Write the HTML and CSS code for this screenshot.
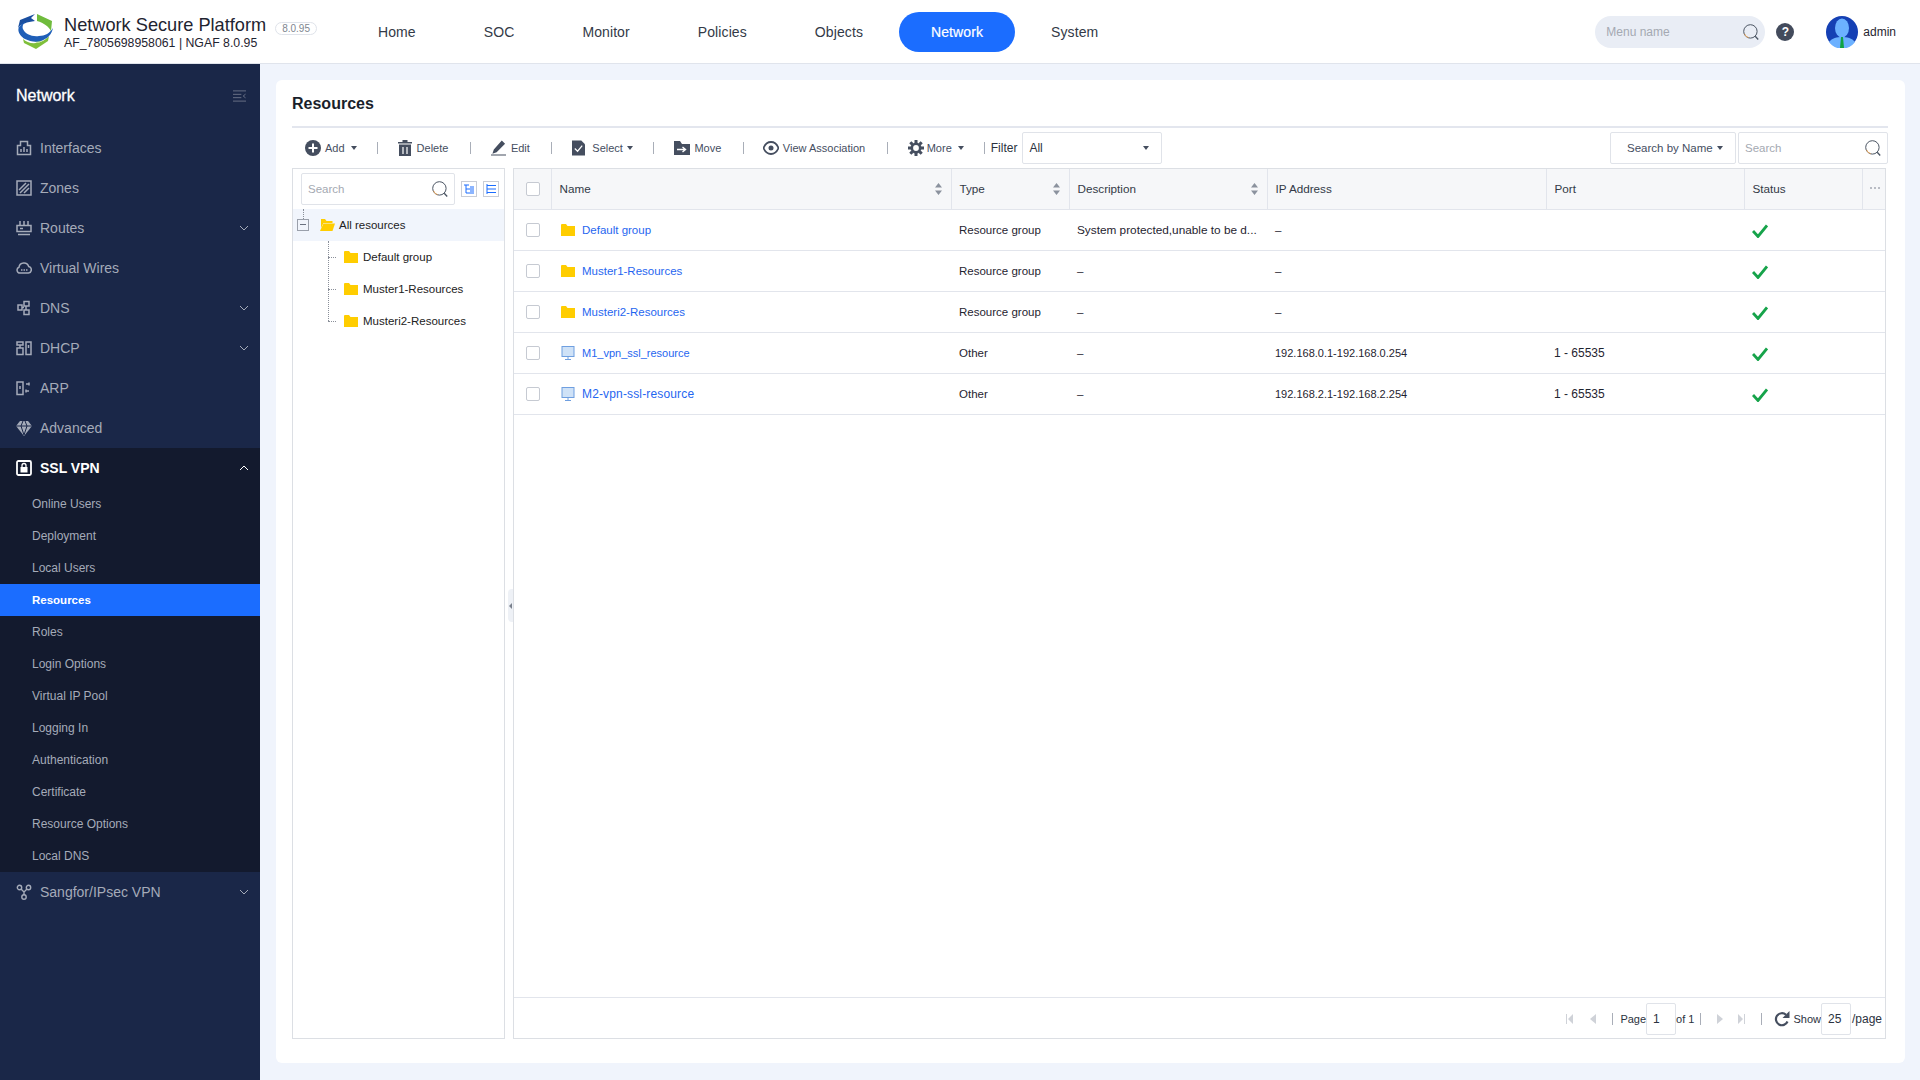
FILE: index.html
```html
<!DOCTYPE html>
<html lang="en">
<head>
    <meta charset="UTF-8">
    <title>Network Secure Platform - Resources</title>
    <link rel="stylesheet" href="styles.css">
</head>
<body>
    <svg class="sprite" xmlns="http://www.w3.org/2000/svg">
        <symbol id="i-search" viewBox="0 0 16 16"><circle cx="7.400" cy="7.400" r="6.700" fill="none" stroke="#4b5563" stroke-width="1"/><path d="M12.200 12.200l3 3.300" fill="none" stroke="#4b5563" stroke-width="1.300"/><path d="M1.500 9.800a6.200 6.200 0 0 0 4.200 3.900" fill="none" stroke="#e2a15a" stroke-width="1"/></symbol>
        <symbol id="i-folder" viewBox="0 0 14 12"><path d="M0 1a1 1 0 0 1 1-1h4l1.500 2H14v10H0z" fill="#ffcd00"/></symbol>
        <symbol id="i-screen" viewBox="0 0 14 14"><rect x="1" y="0.500" width="12" height="10" fill="#cfe2f7" stroke="#6f9fe0"/><path d="M7 11v2M4 13.500h6" stroke="#6f9fe0"/></symbol>
        <symbol id="i-check" viewBox="0 0 16 14"><path d="M1 7l5 5.500L15 1.500" fill="none" stroke="#16a34a" stroke-width="2.800"/></symbol>
        <symbol id="i-sort" viewBox="0 0 7 12"><path d="M3.500 0L7 4.500H0zM3.500 12L0 7.500h7z" fill="#8b929e"/></symbol>
        <symbol id="i-chev" viewBox="0 0 10 6"><path d="M1 1l4 4 4-4" fill="none" stroke="currentColor" stroke-width="1"/></symbol>
    </svg>

    <header class="topbar">
        <div class="brand">
            <svg class="logo" viewBox="0 0 36 36">
                <path d="M19 0l15 7-1 10c-2-4-7-8-14-10z" fill="#6fbb3c"/>
                <path d="M17 0L2 6 0 14C3 10 9 8 17 7l-4-3z" fill="#1a4fa0"/>
                <path d="M5 25c6 6 18 6 26-3l-1 5-12 8-12-6z" fill="#7fbf3a"/>
                <path d="M14 24c4 1 9 0 12-1-1 3-4 6-7 6-2-1-4-3-5-5z" fill="#b5dc8a"/>
                <path d="M1 13c-2 4 1 9 6 12 6 3 14 4 20 0 4-2 7-6 8-11-3 5-8 8-14 8-7 1-14-2-16-7-1-2 0-5 2-7-1 0-4 3-6 5z" fill="#1f5fb8"/>
            </svg>
            <div class="brand-text">
                <div class="brand-name">Network Secure Platform</div>
                <div class="brand-sub">AF_7805698958061 | NGAF 8.0.95</div>
            </div>
            <span class="version">8.0.95</span>
        </div>
        <nav class="topnav">
            <a>Home</a>
            <a>SOC</a>
            <a>Monitor</a>
            <a>Policies</a>
            <a>Objects</a>
            <a class="active">Network</a>
            <a>System</a>
        </nav>
        <div class="top-right">
            <div class="menu-search">
                <input type="text" placeholder="Menu name">
                <svg class="ico-16"><use href="#i-search"/></svg>
            </div>
            <span class="help">?</span>
            <svg class="avatar" viewBox="0 0 32 32">
                <circle cx="16" cy="16" r="16" fill="#1540b4"/>
                <ellipse cx="16" cy="12" rx="7" ry="9.500" fill="#6cb1ff"/>
                <path d="M3 26c3-4 8-5 13-5s10 1 13 5a16 16 0 0 1-26 0z" fill="#6cb1ff"/>
                <path d="M15 21h2l1 11h-4z" fill="#10a344"/>
            </svg>
            <span class="user">admin</span>
        </div>
    </header>

    <div class="layout">
        <aside class="sidebar">
            <div class="side-head">
                <span>Network</span>
                <svg class="side-toggle" viewBox="0 0 14 12"><path d="M0 .5h14M0 4.200h9M0 7.800h9M0 11.500h14M13.500 4L11 6l2.500 2" fill="none" stroke="#6d7589"/></svg>
            </div>

            <a class="side-item">
                <svg class="side-ico" viewBox="0 0 16 16"><path d="M1.500 5.500h3v-4h7v4h3v9h-13z" fill="none" stroke="currentColor" stroke-width="1.500"/><path d="M5 9v3M8 7v5M11 9v3" stroke="currentColor" stroke-width="1.500"/></svg>
                Interfaces
            </a>
            <a class="side-item">
                <svg class="side-ico" viewBox="0 0 16 16"><rect x="1" y="1" width="14" height="14" fill="none" stroke="currentColor" stroke-width="1.500"/><path d="M3 10l7-7M4 13l9-9M8 13l5-5" stroke="currentColor" stroke-width="1.500"/></svg>
                Zones
            </a>
            <a class="side-item">
                <svg class="side-ico" viewBox="0 0 16 16"><rect x="1" y="5.500" width="14" height="6" fill="none" stroke="currentColor" stroke-width="1.500"/><path d="M4 1v4M8 1v4M12 1v4M2 14.500h12M4 8.500h3" stroke="currentColor" stroke-width="1.500"/></svg>
                Routes
                <svg class="chev"><use href="#i-chev"/></svg>
            </a>
            <a class="side-item">
                <svg class="side-ico" viewBox="0 0 16 16"><path d="M4 13a3 3 0 0 1-1-5.800A5 5 0 0 1 12.700 6.500 3.300 3.300 0 0 1 12.500 13z" fill="none" stroke="currentColor" stroke-width="1.500"/><path d="M5 10h1.500M7.500 10H9M10 10h1.500" stroke="currentColor" stroke-width="1.500"/></svg>
                Virtual Wires
            </a>
            <a class="side-item">
                <svg class="side-ico" viewBox="0 0 16 16"><path d="M8 1.500h5v4.500H8zM2 5h4v5H2zM8 10h5v4.500H8zM6 7.500h2M10 6v4" fill="none" stroke="currentColor" stroke-width="1.500"/></svg>
                DNS
                <svg class="chev"><use href="#i-chev"/></svg>
            </a>
            <a class="side-item">
                <svg class="side-ico" viewBox="0 0 16 16"><path d="M1 2h6v3H1zM1 8h6v6.500H1zM10 2h5v12.500h-5zM4 5v3M12.500 5v3" fill="none" stroke="currentColor" stroke-width="1.500"/></svg>
                DHCP
                <svg class="chev"><use href="#i-chev"/></svg>
            </a>
            <a class="side-item">
                <svg class="side-ico" viewBox="0 0 16 16"><path d="M1 2h6v12.500H1zM4 6v3" fill="none" stroke="currentColor" stroke-width="1.500"/><path d="M10 4h3M10 11h3M13 2.500v3M10 9.500v3" stroke="currentColor" stroke-width="1.500"/></svg>
                ARP
            </a>
            <a class="side-item">
                <svg class="side-ico" viewBox="0 0 16 16"><path d="M4 1h8l4 5-8 10L0 6z" fill="currentColor"/><path d="M0 6h16M5 6l3 9 3-9M5 6l2-5M11 6L9 1" stroke="#1a2748" stroke-width="1" fill="none"/></svg>
                Advanced
            </a>

            <div class="side-group">
                <a class="side-item open">
                    <svg class="side-ico" viewBox="0 0 16 16"><rect x="1" y="1" width="14" height="14" rx="1.500" fill="none" stroke="currentColor" stroke-width="1.800"/><rect x="4.500" y="7" width="7" height="5.500" fill="currentColor"/><path d="M6 7V5.500a2 2 0 0 1 4 0V7" fill="none" stroke="currentColor" stroke-width="1.300"/></svg>
                    SSL VPN
                    <svg class="chev up"><use href="#i-chev"/></svg>
                </a>
                <a class="sub-item">Online Users</a>
                <a class="sub-item">Deployment</a>
                <a class="sub-item">Local Users</a>
                <a class="sub-item active">Resources</a>
                <a class="sub-item">Roles</a>
                <a class="sub-item">Login Options</a>
                <a class="sub-item">Virtual IP Pool</a>
                <a class="sub-item">Logging In</a>
                <a class="sub-item">Authentication</a>
                <a class="sub-item">Certificate</a>
                <a class="sub-item">Resource Options</a>
                <a class="sub-item">Local DNS</a>
            </div>

            <a class="side-item">
                <svg class="side-ico" viewBox="0 0 16 16"><circle cx="3.500" cy="3.500" r="2.200" fill="none" stroke="currentColor" stroke-width="1.400"/><circle cx="12.500" cy="3.500" r="2.200" fill="none" stroke="currentColor" stroke-width="1.400"/><circle cx="8" cy="13" r="2.200" fill="none" stroke="currentColor" stroke-width="1.400"/><path d="M5 5l2.500 2.500M11 5L8.500 7.500M8 7v4" fill="none" stroke="currentColor" stroke-width="1.400"/></svg>
                Sangfor/IPsec VPN
                <svg class="chev"><use href="#i-chev"/></svg>
            </a>
        </aside>

        <main class="content">
            <section class="card">
                <h1 class="page-title">Resources</h1>

                <div class="toolbar">
                    <a class="tool tool-menu">
                        <svg class="tool-ico" viewBox="0 0 16 16"><circle cx="8" cy="8" r="8"/><path d="M8 3.500v9M3.500 8h9" stroke="#fff" stroke-width="2"/></svg>
                        Add <i class="caret"></i>
                    </a>
                    <i class="sep"></i>
                    <a class="tool">
                        <svg class="tool-ico ico-delete" viewBox="0 0 14 16"><path d="M0 2h14v1.500H0zM4.500 0h5v2h-5zM1 4.500h12V16H1z"/><path d="M5 7v7M9 7v7" stroke="#fff" stroke-width="1.200"/></svg>
                        Delete
                    </a>
                    <i class="sep"></i>
                    <a class="tool">
                        <svg class="tool-ico ico-edit" viewBox="0 0 16 16"><path d="M11.500 0L15 3.500 6 12.500 1.500 14 3 9.500zM0 15h16v1H0z"/></svg>
                        Edit
                    </a>
                    <i class="sep"></i>
                    <a class="tool tool-menu tool-select">
                        <svg class="tool-ico ico-select" viewBox="0 0 14 16"><path d="M0 0h10l4 4v12H0z"/><path d="M3 8.500l3 3 5-6" fill="none" stroke="#fff" stroke-width="1.300"/></svg>
                        Select <i class="caret"></i>
                    </a>
                    <i class="sep"></i>
                    <a class="tool">
                        <svg class="tool-ico" viewBox="0 0 16 16"><path d="M0 1h6l2 3h8v11H0z"/><path d="M3 9.500h8M8.500 7l3 2.500-3 2.500" fill="none" stroke="#fff" stroke-width="1.400"/></svg>
                        Move
                    </a>
                    <i class="sep"></i>
                    <a class="tool tool-eye">
                        <svg class="tool-ico" viewBox="0 0 16 14"><path d="M8 1C4 1 1.500 4.500.5 7c1 2.500 3.500 6 7.500 6s6.500-3.500 7.500-6C14.500 4.500 12 1 8 1z" fill="none" stroke="#454e5f" stroke-width="1.800"/><circle cx="8" cy="7" r="2.500"/></svg>
                        View Association
                    </a>
                    <i class="sep"></i>
                    <a class="tool tool-menu">
                        <svg class="tool-ico ico-gear" viewBox="0 0 16 16"><circle cx="8" cy="8" r="4.200" fill="none" stroke="#454e5f" stroke-width="2.600"/><path d="M8 0v3M8 13v3M0 8h3M13 8h3M2.300 2.300l2.100 2.100M11.600 11.600l2.100 2.100M13.700 2.300l-2.100 2.100M4.400 11.600l-2.100 2.100" stroke="#454e5f" stroke-width="3"/></svg>
                        More <i class="caret"></i>
                    </a>
                    <i class="sep sep-near"></i>
                    <span class="filter-label">Filter</span>
                    <div class="select filter-select">All <i class="caret"></i></div>

                    <div class="search-group">
                        <div class="select search-by">Search by Name <i class="caret"></i></div>
                        <div class="search-box">
                            <input type="text" placeholder="Search">
                            <svg class="ico-16"><use href="#i-search"/></svg>
                        </div>
                    </div>
                </div>

                <div class="panels">
                    <div class="tree-panel">
                        <div class="tree-tools">
                            <div class="search-box tree-search">
                                <input type="text" placeholder="Search">
                                <svg class="ico-16"><use href="#i-search"/></svg>
                            </div>
                            <span class="tree-btn">
                                <svg viewBox="0 0 10 10"><path d="M0 1h5M2 1v8h8M2 5h8M6 3h4M6 7h4" fill="none" stroke="#1b6dff"/></svg>
                            </span>
                            <span class="tree-btn">
                                <svg viewBox="0 0 10 10"><path d="M1 0v10M1 1.500h9M1 5h9M1 8.500h9" fill="none" stroke="#1b6dff"/></svg>
                            </span>
                        </div>
                        <div class="tree-root">
                            <i class="tree-stub"></i>
                            <span class="tree-toggle"></span>
                            <svg class="folder-open" viewBox="0 0 15 12"><path d="M1 0h4l1.500 2h6v2H3.500L1 9z" fill="#ffcd00"/><path d="M3.500 4.500H15L12.500 12H0z" fill="#ffcd00"/></svg>
                            All resources
                        </div>
                        <div class="tree-children">
                            <div class="tree-node"><svg class="folder"><use href="#i-folder"/></svg>Default group</div>
                            <div class="tree-node"><svg class="folder"><use href="#i-folder"/></svg>Muster1-Resources</div>
                            <div class="tree-node"><svg class="folder"><use href="#i-folder"/></svg>Musteri2-Resources</div>
                        </div>
                    </div>

                    <span class="panel-handle"></span>

                    <div class="table-panel">
                        <div class="table-wrap">
                            <table class="res-table">
                                <thead>
                                    <tr>
                                        <th class="col-check"><span class="checkbox"></span></th>
                                        <th class="col-name">Name<svg class="sort"><use href="#i-sort"/></svg></th>
                                        <th class="col-type">Type<svg class="sort"><use href="#i-sort"/></svg></th>
                                        <th class="col-desc">Description<svg class="sort"><use href="#i-sort"/></svg></th>
                                        <th class="col-ip">IP Address</th>
                                        <th class="col-port">Port</th>
                                        <th class="col-status">Status</th>
                                        <th class="col-more">
                                            <svg class="dots" viewBox="0 0 10 2"><circle cx="1" cy="1" r="1"/><circle cx="5" cy="1" r="1"/><circle cx="9" cy="1" r="1"/></svg>
                                        </th>
                                    </tr>
                                </thead>
                                <tbody>
                                    <tr>
                                        <td><span class="checkbox"></span></td>
                                        <td><a class="res-link"><svg class="folder"><use href="#i-folder"/></svg>Default group</a></td>
                                        <td>Resource group</td>
                                        <td class="desc-text">System protected,unable to be d...</td>
                                        <td>–</td>
                                        <td></td>
                                        <td><svg class="ok"><use href="#i-check"/></svg></td>
                                        <td></td>
                                    </tr>
                                    <tr>
                                        <td><span class="checkbox"></span></td>
                                        <td><a class="res-link"><svg class="folder"><use href="#i-folder"/></svg>Muster1-Resources</a></td>
                                        <td>Resource group</td>
                                        <td>–</td>
                                        <td>–</td>
                                        <td></td>
                                        <td><svg class="ok"><use href="#i-check"/></svg></td>
                                        <td></td>
                                    </tr>
                                    <tr>
                                        <td><span class="checkbox"></span></td>
                                        <td><a class="res-link"><svg class="folder"><use href="#i-folder"/></svg>Musteri2-Resources</a></td>
                                        <td>Resource group</td>
                                        <td>–</td>
                                        <td>–</td>
                                        <td></td>
                                        <td><svg class="ok"><use href="#i-check"/></svg></td>
                                        <td></td>
                                    </tr>
                                    <tr>
                                        <td><span class="checkbox"></span></td>
                                        <td><a class="res-link res-narrow"><svg class="screen"><use href="#i-screen"/></svg>M1_vpn_ssl_resource</a></td>
                                        <td>Other</td>
                                        <td>–</td>
                                        <td class="ip-text">192.168.0.1-192.168.0.254</td>
                                        <td class="port-text">1 - 65535</td>
                                        <td><svg class="ok"><use href="#i-check"/></svg></td>
                                        <td></td>
                                    </tr>
                                    <tr>
                                        <td><span class="checkbox"></span></td>
                                        <td><a class="res-link res-wide"><svg class="screen"><use href="#i-screen"/></svg>M2-vpn-ssl-resource</a></td>
                                        <td>Other</td>
                                        <td>–</td>
                                        <td class="ip-text">192.168.2.1-192.168.2.254</td>
                                        <td class="port-text">1 - 65535</td>
                                        <td><svg class="ok"><use href="#i-check"/></svg></td>
                                        <td></td>
                                    </tr>
                                </tbody>
                            </table>
                        </div>
                        <div class="pager">
                            <svg class="pg-ico first" viewBox="0 0 7 10"><path d="M0 0h1v10H0zM7 0v10L2 5z"/></svg>
                            <svg class="pg-ico prev" viewBox="0 0 6 10"><path d="M6 0v10L0 5z"/></svg>
                            <i class="sep sep-page"></i>
                            <span class="pg-label">Page</span>
                            <span class="pg-input">1</span>
                            <span class="pg-label pg-of">of 1</span>
                            <i class="sep"></i>
                            <svg class="pg-ico next" viewBox="0 0 6 10"><path d="M0 0v10l6-5z"/></svg>
                            <svg class="pg-ico last" viewBox="0 0 7 10"><path d="M7 0H6v10h1zM0 0v10l5-5z"/></svg>
                            <i class="sep"></i>
                            <svg class="pg-refresh" viewBox="0 0 16 16"><path d="M13.500 10.500A6 6 0 1 1 12 3.800" fill="none" stroke="#454e5f" stroke-width="2.200"/><path d="M15.500 0v7h-7z" fill="#454e5f"/></svg>
                            <span class="pg-label">Show</span>
                            <span class="pg-input">25</span>
                            <span class="pg-per">/page</span>
                        </div>
                    </div>
                </div>
            </section>
        </main>
    </div>
</body>
</html>
```

FILE: styles.css
```css
* {
    box-sizing: border-box;
}

html,
body {
    margin: 0;
    height: 100%;
}

body {
    display: flex;
    flex-direction: column;
    width: 1920px;
    height: 1080px;
    overflow: hidden;
    background: #f0f4fc;
    color: #1f2430;
    font-family: "Liberation Sans", Arial, sans-serif;
    font-size: 12px;
}

a {
    color: inherit;
    text-decoration: none;
}

i {
    font-style: normal;
}

input {
    border: none;
    outline: none;
    background: transparent;
    font-family: inherit;
    font-size: 11.500px;
    min-width: 0;
    padding: 0;
    flex: 1;
}

input::placeholder {
    color: #a4a9b2;
    opacity: 1;
}

.sprite {
    display: none;
}

.ico-16 {
    width: 16px;
    height: 16px;
    flex: none;
}

/* Top bar */
.topbar {
    display: flex;
    align-items: center;
    height: 64px;
    flex: none;
    background: #fff;
    border-bottom: 1px solid #e0e4ec;
}

.brand {
    display: flex;
    align-items: center;
    width: 346px;
    flex: none;
    padding-left: 18px;
}

.logo {
    width: 36px;
    height: 36px;
    flex: none;
}

.brand-text {
    margin-left: 10px;
    white-space: nowrap;
}

.brand-name {
    font-size: 18.200px;
    line-height: 22px;
    color: #1f2430;
}

.brand-sub {
    font-size: 12.300px;
    line-height: 14px;
}

.version {
    margin: -6px 0 0 9px;
    padding: 0 6px;
    height: 13px;
    line-height: 11px;
    border: 1px solid #dfe3ea;
    border-radius: 7px;
    font-size: 10px;
    color: #80868f;
}

.topnav {
    display: flex;
    gap: 4px;
}

.topnav a {
    height: 40px;
    line-height: 40px;
    padding: 0 32px;
    border-radius: 20px;
    font-size: 14px;
    letter-spacing: .1px;
    color: #333a47;
}

.topnav a.active {
    background: #1b6dff;
    color: #fff;
    -webkit-text-stroke: .2px #fff;
}

.top-right {
    display: flex;
    align-items: center;
    margin-left: auto;
    padding-right: 24px;
}

.menu-search {
    display: flex;
    align-items: center;
    width: 170px;
    height: 32px;
    padding: 0 6px 0 11px;
    border-radius: 16px;
    background: #e9edf5;
}

.menu-search input {
    font-size: 12px;
}

.help {
    width: 18px;
    height: 18px;
    margin-left: 11px;
    border-radius: 50%;
    background: #434b5c;
    color: #fff;
    font-size: 12px;
    font-weight: bold;
    line-height: 18px;
    text-align: center;
}

.avatar {
    width: 32px;
    height: 32px;
    margin-left: 32px;
}

.user {
    margin-left: 5px;
    font-size: 12px;
}

/* Sidebar */
.layout {
    display: flex;
    flex: 1;
    min-height: 0;
}

.sidebar {
    width: 260px;
    flex: none;
    background: #1a2748;
    color: #a5abb9;
}

.side-head {
    display: flex;
    align-items: center;
    justify-content: space-between;
    height: 64px;
    padding: 0 14px 0 16px;
    color: #fff;
    font-size: 16px;
    -webkit-text-stroke: .3px #fff;
}

.side-toggle {
    width: 13px;
    height: 12px;
}

.side-item {
    display: flex;
    align-items: center;
    height: 40px;
    padding: 0 11px 0 16px;
    font-size: 14px;
}

.side-ico {
    width: 16px;
    height: 16px;
    margin-right: 8px;
    flex: none;
}

.chev {
    width: 10px;
    height: 6px;
    margin-left: auto;
}

.chev.up {
    transform: rotate(180deg);
}

.side-group {
    background: #131a2e;
}

.side-item.open {
    color: #fff;
    font-weight: bold;
}

.sub-item {
    display: block;
    height: 32px;
    line-height: 32px;
    padding-left: 32px;
    font-size: 12px;
}

.sub-item.active {
    background: #1b6dff;
    color: #fff;
    font-size: 11.500px;
    font-weight: bold;
}

/* Content card */
.content {
    flex: 1;
    min-width: 0;
    padding: 16px 15px 17px 16px;
}

.card {
    display: flex;
    flex-direction: column;
    height: 100%;
    padding: 0 17px 24px 16px;
    background: #fff;
    border-radius: 6px;
}

.page-title {
    margin: 0;
    height: 48px;
    flex: none;
    line-height: 47px;
    font-size: 16px;
    font-weight: bold;
    border-bottom: 2px solid #e3e6ee;
    color: #1a1f2b;
}

.toolbar {
    display: flex;
    align-items: center;
    height: 40px;
    flex: none;
    gap: 20px;
    padding-left: 13px;
    font-size: 11px;
    white-space: nowrap;
}

.tool {
    display: flex;
    align-items: center;
    padding-right: 1.500px;
    color: #454e5f;
}

.tool-menu {
    padding-right: 0;
}

.tool-select .caret {
    margin-left: 4.500px;
}

.tool-eye {
    margin-left: -1px;
}

.tool-ico {
    width: 16px;
    height: 16px;
    margin-right: 4px;
    fill: #454e5f;
}

.ico-delete {
    width: 14px;
    margin-right: 5px;
}

.ico-edit {
    width: 15px;
    margin-right: 5px;
}

.ico-select {
    width: 13px;
    margin-right: 7px;
}

.ico-gear {
    margin-right: 3px;
}

.caret {
    display: inline-block;
    width: 0;
    height: 0;
    margin-left: 6px;
    border-top: 4px solid #454e5f;
    border-left: 3px solid transparent;
    border-right: 3px solid transparent;
}

.sep {
    width: 1px;
    height: 12px;
    flex: none;
    background: #a9aeb8;
}

.toolbar .sep-near {
    margin-right: -14px;
}

.filter-label {
    margin-right: -15px;
    font-size: 12px;
    color: #2b3240;
}

.select {
    display: flex;
    align-items: center;
    justify-content: space-between;
    height: 32px;
    border: 1px solid #e0e3e9;
    border-radius: 2px;
}

.filter-select {
    width: 140px;
    padding: 0 12px 0 6px;
    font-size: 12px;
    color: #2b3240;
}

.search-group {
    display: flex;
    gap: 2px;
    margin-left: auto;
}

.search-by {
    width: 126px;
    padding: 0 12px 0 16px;
    font-size: 11.500px;
    color: #454e5f;
}

.search-by .caret {
    margin-left: 0;
}

.search-box {
    display: flex;
    align-items: center;
    width: 150px;
    height: 32px;
    padding: 0 6px;
    border: 1px solid #e0e3e9;
    border-radius: 2px;
}

/* Tree and table */
.panels {
    display: flex;
    flex: 1;
    min-height: 0;
    gap: 8px;
    padding-right: 2px;
    position: relative;
}

.tree-panel {
    width: 213px;
    flex: none;
    border: 1px solid #dcdfe4;
    font-size: 11.500px;
    color: #222;
}

.tree-tools {
    display: flex;
    align-items: center;
    height: 40px;
    padding-left: 8px;
}

.tree-search {
    width: 154px;
    margin-right: 6px;
}

.tree-btn {
    display: flex;
    align-items: center;
    justify-content: center;
    width: 16px;
    height: 16px;
    margin-right: 6px;
    border: 1px solid #c9cdd6;
    flex: none;
}

.tree-btn svg {
    width: 10px;
    height: 10px;
}

.tree-root {
    position: relative;
    display: flex;
    align-items: center;
    height: 32px;
    padding-left: 4px;
    background: #f1f5fc;
}

.tree-stub {
    position: absolute;
    left: 10px;
    top: 0;
    height: 10px;
    border-left: 1px dotted #8a8f99;
}

.tree-toggle {
    position: relative;
    width: 12px;
    height: 12px;
    margin-right: 11px;
    border: 1px solid #9aa0ab;
}

.tree-toggle::after {
    content: "";
    position: absolute;
    left: 2px;
    right: 2px;
    top: 4px;
    border-top: 1px solid #6b7280;
}

.folder-open {
    width: 15px;
    height: 12px;
    margin-right: 4px;
}

.tree-children {
    position: relative;
}

.tree-children::before {
    content: "";
    position: absolute;
    left: 35px;
    top: 0;
    height: 80px;
    border-left: 1px dotted #8a8f99;
}

.tree-node {
    position: relative;
    display: flex;
    align-items: center;
    height: 32px;
    padding-left: 51px;
}

.tree-node::before {
    content: "";
    position: absolute;
    left: 35px;
    width: 8px;
    border-top: 1px dotted #8a8f99;
}

.folder {
    width: 14px;
    height: 12px;
    margin-right: 5px;
    flex: none;
}

.screen {
    width: 14px;
    height: 14px;
    margin-right: 7px;
    flex: none;
}

.panel-handle {
    position: absolute;
    left: 216px;
    top: 421px;
    width: 5px;
    height: 33px;
    background: #eef1f6;
    border-radius: 4px 0 0 4px;
}

.panel-handle::after {
    content: "";
    position: absolute;
    left: 1px;
    top: 14px;
    border-right: 3px solid #7a818d;
    border-top: 3px solid transparent;
    border-bottom: 3px solid transparent;
}

.table-panel {
    display: flex;
    flex-direction: column;
    flex: 1;
    min-width: 0;
    border: 1px solid #dcdfe4;
}

.table-wrap {
    flex: 1;
    min-height: 0;
}

.res-table {
    width: 100%;
    border-collapse: collapse;
    table-layout: fixed;
    font-size: 11.500px;
}

.res-table th,
.res-table td {
    height: 41px;
    padding: 0 8px;
    border-bottom: 1px solid #e2e5ec;
    text-align: left;
    font-weight: normal;
    white-space: nowrap;
    overflow: hidden;
}

.res-table th {
    position: relative;
    height: 40px;
    background: #f6f7f9;
    font-size: 11.700px;
    color: #333a47;
    border-left: 1px solid #e2e5ec;
}

.res-table th:first-child {
    border-left: none;
}

.res-table td:first-child,
.res-table th:first-child {
    padding: 0 0 0 12px;
}

.col-check { width: 37px; }
.col-name { width: 400px; }
.col-type { width: 118px; }
.col-desc { width: 198px; }
.col-ip { width: 279px; }
.col-port { width: 198px; }
.col-status { width: 118px; }

.desc-text {
    font-size: 11.800px;
}

.ip-text {
    font-size: 11px;
}

.port-text {
    font-size: 12px;
}

.sort {
    position: absolute;
    right: 9px;
    top: 14px;
    width: 7px;
    height: 12px;
}

.dots {
    display: block;
    width: 10px;
    height: 2px;
    margin: -2px 0 0 -1px;
    fill: #a4a9b2;
}

.checkbox {
    display: block;
    width: 14px;
    height: 14px;
    border: 1px solid #c6cad2;
    border-radius: 2px;
    background: #fff;
}

.res-link {
    display: flex;
    align-items: center;
    padding-left: 2px;
    color: #1f66f0;
}

.res-narrow {
    font-size: 11px;
}

.res-wide {
    font-size: 12px;
    letter-spacing: .15px;
}

.res-link .folder {
    margin-right: 7px;
}

.ok {
    display: block;
    width: 16px;
    height: 14px;
    margin-top: 3px;
}

/* Pager */
.pager {
    display: flex;
    align-items: center;
    justify-content: flex-end;
    height: 41px;
    flex: none;
    padding: 1px 3px 0 0;
    border-top: 1px solid #e2e5ec;
    color: #2b3240;
}

.pg-ico {
    height: 10px;
    fill: #cfd2d8;
}

.pg-ico.first { width: 7px; margin-right: 17px; }
.pg-ico.prev { width: 6px; margin-right: 16px; }
.pg-ico.next { width: 6px; margin: 0 15px 0 16px; }
.pg-ico.last { width: 7px; margin-right: 16px; }

.pager .sep-page {
    margin-right: 7px;
}

.pg-label {
    font-size: 11px;
}

.pg-of {
    margin-right: 6px;
}

.pg-per {
    margin-left: 1px;
}

.pg-input {
    width: 30px;
    height: 32px;
    line-height: 30px;
    padding-left: 6px;
    border: 1px solid #e0e3e9;
    border-radius: 2px;
}

.pg-refresh {
    width: 16px;
    height: 16px;
    margin: 0 3px 0 12px;
}
```
